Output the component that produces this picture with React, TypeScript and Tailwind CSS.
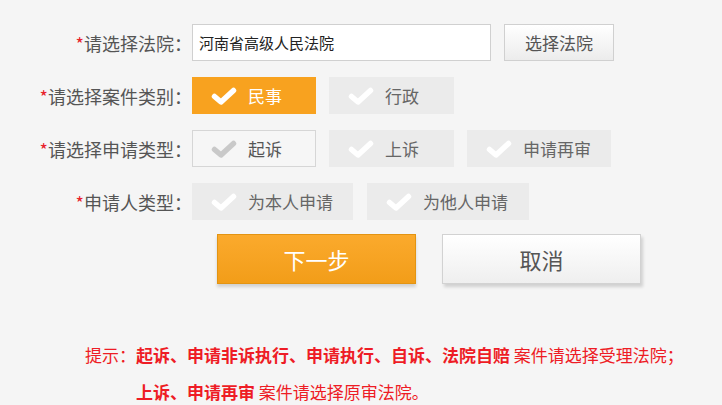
import { useState } from 'react';

const Check = ({ color }: { color: string }) => (
  <svg width="26" height="18" viewBox="0 0 26 18" className="shrink-0">
    <path d="M3.5 9.5 L10 15 L22.5 3.5" fill="none" stroke={color} strokeWidth="5.5" strokeLinecap="round" strokeLinejoin="round" />
  </svg>
);

type OptProps = {
  label: string;
  width: string;
  active?: boolean;
  outlined?: boolean;
  onClick?: () => void;
};

const Option = ({ label, width, active, outlined, onClick }: OptProps) => {
  let cls = 'bg-[#ebebeb] border border-[#ebebeb] text-[#666]';
  let check = '#ffffff';
  if (active) {
    cls = 'bg-[#f8a21f] border border-[#f8a21f] text-white';
  } else if (outlined) {
    cls = 'bg-[#f6f6f6] border border-[#d6d6d6] text-[#555]';
    check = '#c9c9c9';
  }
  return (
    <button
      onClick={onClick}
      className={`${width} h-[37px] flex items-center pl-[18px] gap-[11px] text-[17px] leading-none ${cls}`}
    >
      <Check color={check} />
      <span>{label}</span>
    </button>
  );
};

const Label = ({ text }: { text: string }) => (
  <div className="w-[192px] shrink-0 text-right text-[18px] text-[#555] leading-none">
    <span className="text-[#e8202a]">*</span>
    {text}：
  </div>
);

export default function App() {
  const [caseType, setCaseType] = useState('民事');
  const [applyType, setApplyType] = useState('起诉');
  const [person, setPerson] = useState('');

  return (
    <div
      className="w-full h-[405px] bg-[#f5f5f5] overflow-hidden"
      style={{ fontFamily: '"Noto Sans CJK SC", "Microsoft YaHei", sans-serif' }}
    >
      <div className="pt-[24px] flex flex-col gap-[16px]">
        {/* 法院 */}
        <div className="flex items-center h-[37px]">
          <Label text="请选择法院" />
          <input
            defaultValue="河南省高级人民法院"
            className="w-[299px] h-[37px] bg-white border border-[#d0d0d0] px-[6px] text-[15px] text-[#222] outline-none"
          />
          <button className="ml-[13px] w-[110px] h-[37px] border border-[#d0d0d0] bg-gradient-to-b from-white to-[#ececec] text-[17px] text-[#555]">
            选择法院
          </button>
        </div>

        {/* 案件类别 */}
        <div className="flex items-center h-[37px]">
          <Label text="请选择案件类别" />
          <div className="flex gap-[13px]">
            <Option label="民事" width="w-[124px]" active={caseType === '民事'} onClick={() => setCaseType('民事')} />
            <Option label="行政" width="w-[125px]" active={caseType === '行政'} onClick={() => setCaseType('行政')} />
          </div>
        </div>

        {/* 申请类型 */}
        <div className="flex items-center h-[37px]">
          <Label text="请选择申请类型" />
          <div className="flex gap-[13px]">
            <Option label="起诉" width="w-[124px]" outlined={applyType === '起诉'} onClick={() => setApplyType('起诉')} />
            <Option label="上诉" width="w-[125px]" outlined={applyType === '上诉'} onClick={() => setApplyType('上诉')} />
            <Option label="申请再审" width="w-[144px]" outlined={applyType === '申请再审'} onClick={() => setApplyType('申请再审')} />
          </div>
        </div>

        {/* 申请人类型 */}
        <div className="flex items-center h-[37px]">
          <Label text="申请人类型" />
          <div className="flex gap-[14px]">
            <Option label="为本人申请" width="w-[161px]" outlined={person === '本人'} onClick={() => setPerson('本人')} />
            <Option label="为他人申请" width="w-[162px]" outlined={person === '他人'} onClick={() => setPerson('他人')} />
          </div>
        </div>
      </div>

      {/* 操作按钮 */}
      <div className="flex gap-[26px] pl-[217px] mt-[14px]">
        <button className="w-[199px] h-[50px] border border-[#e39412] bg-gradient-to-b from-[#fbaa2c] to-[#f29d18] text-white text-[22px] shadow-[0_3px_3px_rgba(0,0,0,0.15)]">
          下一步
        </button>
        <button className="w-[199px] h-[50px] border border-[#d2d2d2] bg-gradient-to-b from-white to-[#efefef] text-[#555] text-[22px] shadow-[2px_3px_3px_rgba(0,0,0,0.15)]">
          取消
        </button>
      </div>

      {/* 提示 */}
      <div className="flex pl-[85px] mt-[52px] text-[17px] leading-[37px] text-[#ee1c25]">
        <span className="shrink-0">提示：</span>
        <div>
          <div>
            <b>起诉、申请非诉执行、申请执行、自诉、法院自赔</b> 案件请选择受理法院；
          </div>
          <div>
            <b>上诉、申请再审</b> 案件请选择原审法院。
          </div>
        </div>
      </div>
    </div>
  );
}
